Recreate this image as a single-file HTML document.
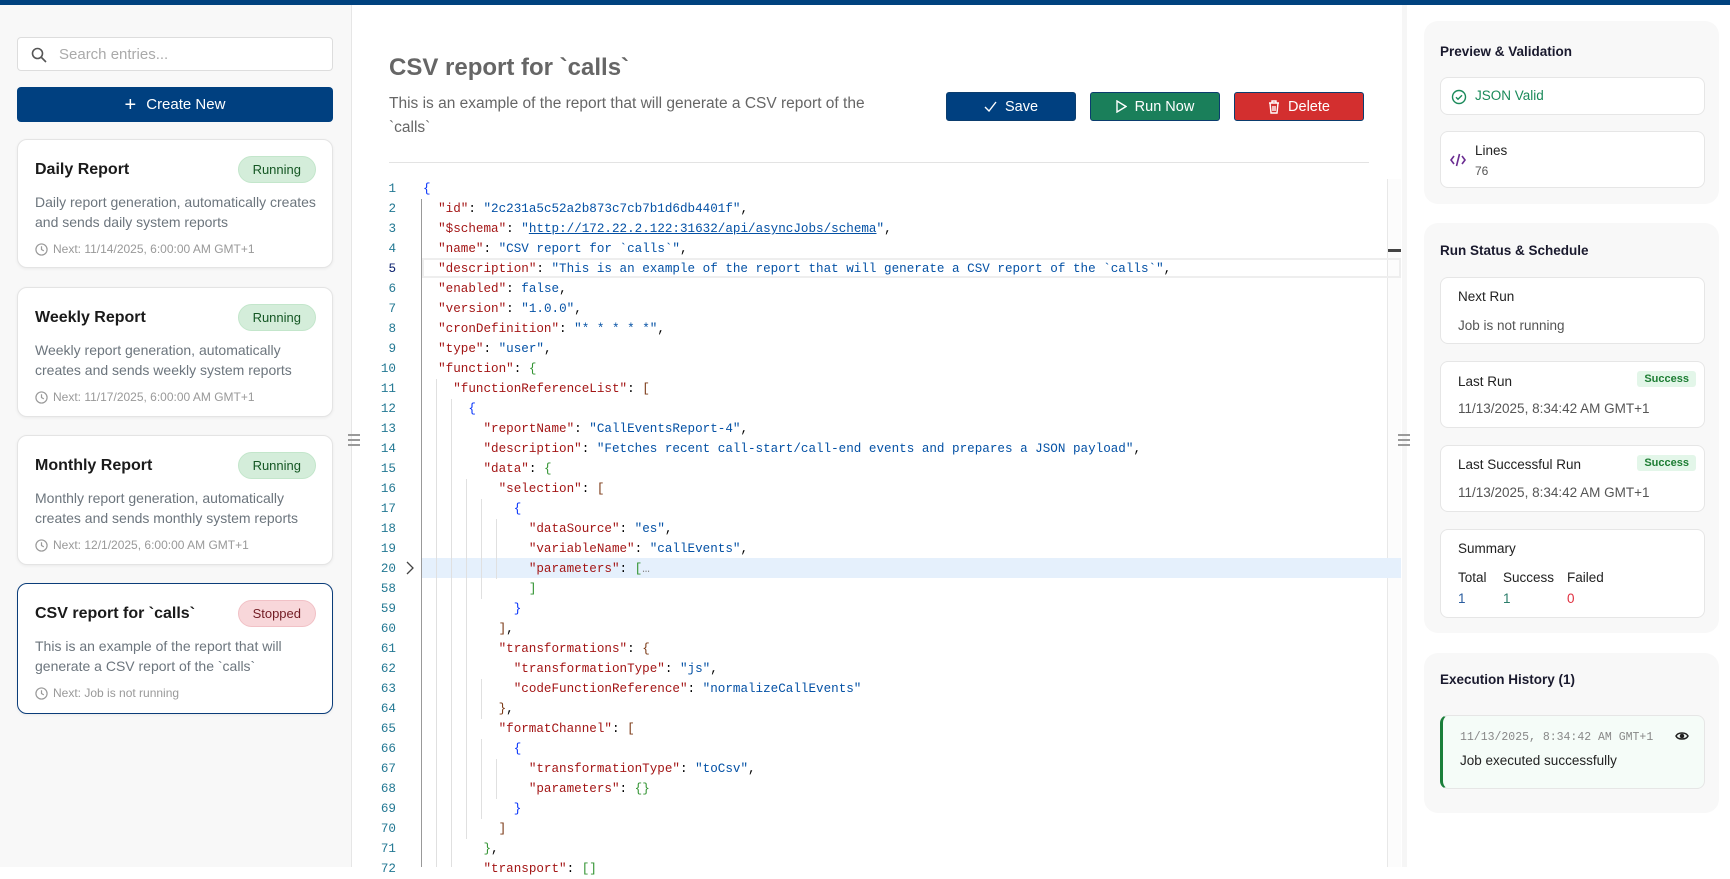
<!DOCTYPE html>
<html><head><meta charset="utf-8">
<style>
*{box-sizing:border-box;margin:0;padding:0}
body{width:1730px;height:867px;overflow:hidden;background:#fff;font-family:"Liberation Sans",sans-serif;position:relative;color:#222}
.topbar{position:absolute;left:0;top:0;width:1730px;height:5px;background:#00427f}
.left{position:absolute;left:0;top:5px;width:352px;height:862px;background:#f8f8f8;border-right:1px solid #e6e6e6}
.search{position:absolute;left:17px;top:32px;width:316px;height:34px;background:#fff;border:1px solid #ddd;border-radius:4px}
.search span{position:absolute;left:41px;top:8px;font-size:15px;color:#aaa}
.create{position:absolute;left:17px;top:82px;width:316px;height:35px;background:#004080;border-radius:4px;color:#fff;font-size:15px;text-align:center;line-height:35px}
.card{position:absolute;left:17px;width:316px;background:#fff;border:1px solid #e4e4e4;border-radius:10px;box-shadow:0 1px 3px rgba(0,0,0,.06)}
.card.sel{border:1px solid #0b3d7a}
.card h3{position:absolute;left:17px;top:21px;font-size:16px;font-weight:bold;color:#1a1a1a}
.badge{position:absolute;right:16px;top:16px;height:27px;padding:0 14px;border-radius:14px;font-size:13px;line-height:25px}
.run{background:#d4edda;border:1px solid #c3e6cb;color:#155724}
.stop{background:#f8d7da;border:1px solid #f1c1c6;color:#721c24}
.card p{position:absolute;left:17px;top:52px;width:295px;font-size:14px;line-height:20px;color:#6c757d;white-space:nowrap}
.card .nx{position:absolute;left:17px;top:102px;font-size:12px;color:#999;display:flex;align-items:center;gap:5px}
.main{position:absolute;left:352px;top:5px;width:1050px;height:862px;background:#fff}
h1{position:absolute;left:389px;top:54px;font-size:24px;font-weight:bold;color:#666}
.desc{position:absolute;left:389px;top:92px;width:500px;font-size:15.5px;line-height:24px;color:#666}
.btn{position:absolute;top:92px;width:130px;height:29px;border-radius:3px;color:#fff;font-size:14.5px;display:flex;align-items:center;justify-content:center;gap:8px}
.hr{position:absolute;left:389px;top:162px;width:980px;height:1px;background:#e3e3e3}
.ln{position:absolute;left:360px;width:36px;text-align:right;font-family:"Liberation Mono",monospace;font-size:12.6px;color:#237893;line-height:20px}
.code{position:absolute;left:423px;font-family:"Liberation Mono",monospace;font-size:12.6px;line-height:20px;white-space:pre;color:#000}
.k{color:#a31515}.s{color:#0451a5}.b1{color:#0431fa}.b2{color:#319331}.b3{color:#7b3814}
.g{position:absolute;width:1px;background:#e0e0e0}
.right{position:absolute;left:1402px;top:5px;width:328px;height:862px;background:#fff;border-left:5px solid #f6f6f6}
.sec{position:absolute;left:1424px;width:295px;background:#f8f8f8;border-radius:14px}
.sec h4{position:absolute;left:16px;font-size:13.5px;font-weight:bold;color:#1a1a2e}
.ic{position:absolute;left:16px;width:265px;background:#fff;border:1px solid #e6e6e6;border-radius:8px}
.lb{position:absolute;left:17px;font-size:13.5px;color:#222}
.vl{position:absolute;left:17px;font-size:13.5px;color:#555}
.sb{position:absolute;right:8px;top:9px;background:#e3f6e9;color:#1e7e34;font-size:11px;font-weight:bold;padding:2px 7px;border-radius:3px}
</style></head><body>
<div class="topbar"></div>
<div class="left">
 <div class="search"><svg style="position:absolute;left:13px;top:9px" width="16" height="16" viewBox="0 0 16 16" fill="none" stroke="#555" stroke-width="1.6"><circle cx="6.5" cy="6.5" r="5"/><path d="M10.5 10.5L15 15"/></svg><span>Search entries...</span></div>
 <div class="create"><span style="font-size:20px;vertical-align:-2px;margin-right:10px">+</span>Create New</div>
 <div class="card" style="top:134px;height:129px"><h3>Daily Report</h3><div class="badge run">Running</div><p>Daily report generation, automatically creates<br>and sends daily system reports</p><div class="nx"><svg width="13" height="13" viewBox="0 0 14 14" fill="none" stroke="#999" stroke-width="1.3"><circle cx="7" cy="7" r="6"/><path d="M7 3.5V7l2.5 1.5"/></svg>Next: 11/14/2025, 6:00:00 AM GMT+1</div></div>
 <div class="card" style="top:282px;height:130px"><h3>Weekly Report</h3><div class="badge run">Running</div><p>Weekly report generation, automatically<br>creates and sends weekly system reports</p><div class="nx"><svg width="13" height="13" viewBox="0 0 14 14" fill="none" stroke="#999" stroke-width="1.3"><circle cx="7" cy="7" r="6"/><path d="M7 3.5V7l2.5 1.5"/></svg>Next: 11/17/2025, 6:00:00 AM GMT+1</div></div>
 <div class="card" style="top:430px;height:130px"><h3>Monthly Report</h3><div class="badge run">Running</div><p>Monthly report generation, automatically<br>creates and sends monthly system reports</p><div class="nx"><svg width="13" height="13" viewBox="0 0 14 14" fill="none" stroke="#999" stroke-width="1.3"><circle cx="7" cy="7" r="6"/><path d="M7 3.5V7l2.5 1.5"/></svg>Next: 12/1/2025, 6:00:00 AM GMT+1</div></div>
 <div class="card sel" style="top:578px;height:131px"><h3>CSV report for `calls`</h3><div class="badge stop">Stopped</div><p>This is an example of the report that will<br>generate a CSV report of the `calls`</p><div class="nx"><svg width="13" height="13" viewBox="0 0 14 14" fill="none" stroke="#999" stroke-width="1.3"><circle cx="7" cy="7" r="6"/><path d="M7 3.5V7l2.5 1.5"/></svg>Next: Job is not running</div></div>
</div>
<div class="main"></div>
<h1>CSV report for `calls`</h1>
<div class="desc">This is an example of the report that will generate a CSV report of the `calls`</div>
<div class="btn" style="left:946px;background:#004080;border:1px solid #0b3d6e"><svg width="13" height="11" viewBox="0 0 13 11" fill="none" stroke="#fff" stroke-width="1.4"><path d="M1 6l4 4 7-9"/></svg>Save</div>
<div class="btn" style="left:1090px;background:#1a7f5a;border:1px solid #0b3d6e"><svg width="11" height="13" viewBox="0 0 11 13" fill="none" stroke="#fff" stroke-width="1.4"><path d="M1 1v11l9-5.5z"/></svg>Run Now</div>
<div class="btn" style="left:1234px;background:#d32f2f;border:1px solid #0b3d6e"><svg width="12" height="14" viewBox="0 0 12 14" fill="none" stroke="#fff" stroke-width="1.4"><path d="M1 3h10M4 3V1h4v2M2 3l1 10h6l1-10M5 6v5M7 6v5"/></svg>Delete</div>
<div class="hr"></div>
<div style="position:absolute;left:1387px;top:179px;width:14px;height:688px;border-left:1px solid #e8e8e8;background:#fcfcfc"></div>
<div style="position:absolute;left:1388px;top:249px;width:13px;height:3px;background:#444"></div>
<div style="position:absolute;left:422px;top:258px;width:979px;height:20px;border:2px solid #eee"></div>
<div style="position:absolute;left:422px;top:558px;width:979px;height:20px;background:#e5f0fc"></div>
<svg style="position:absolute;left:405px;top:561px" width="10" height="14"><path d="M2 1l6 6-6 6" fill="none" stroke="#444" stroke-width="1.3"/></svg>
<div class="g" style="left:421px;top:199px;height:668px;background:#999"></div>
<div class="g" style="left:436px;top:379px;height:488px"></div>
<div class="g" style="left:451px;top:399px;height:468px"></div>
<div class="g" style="left:466px;top:479px;height:360px"></div>
<div class="g" style="left:481px;top:499px;height:100px"></div>
<div class="g" style="left:496px;top:519px;height:60px"></div>
<div class="g" style="left:481px;top:679px;height:40px"></div>
<div class="g" style="left:481px;top:739px;height:80px"></div>
<div class="g" style="left:496px;top:759px;height:40px"></div>
<div class="ln" style="top:179px">1<br>2<br>3<br>4<br><span style="color:#0b216f">5</span><br>6<br>7<br>8<br>9<br>10<br>11<br>12<br>13<br>14<br>15<br>16<br>17<br>18<br>19<br>20<br>58<br>59<br>60<br>61<br>62<br>63<br>64<br>65<br>66<br>67<br>68<br>69<br>70<br>71<br>72</div>
<div class="code" style="top:179px"><span class="b1">{</span>
  <span class="k">"id"</span>: <span class="s">"2c231a5c52a2b873c7cb7b1d6db4401f"</span>,
  <span class="k">"$schema"</span>: <span class="s">"<u>http://172.22.2.122:31632/api/asyncJobs/schema</u>"</span>,
  <span class="k">"name"</span>: <span class="s">"CSV report for `calls`"</span>,
  <span class="k">"description"</span>: <span class="s">"This is an example of the report that will generate a CSV report of the `calls`"</span>,
  <span class="k">"enabled"</span>: <span class="s">false</span>,
  <span class="k">"version"</span>: <span class="s">"1.0.0"</span>,
  <span class="k">"cronDefinition"</span>: <span class="s">"* * * * *"</span>,
  <span class="k">"type"</span>: <span class="s">"user"</span>,
  <span class="k">"function"</span>: <span class="b2">{</span>
    <span class="k">"functionReferenceList"</span>: <span class="b3">[</span>
      <span class="b1">{</span>
        <span class="k">"reportName"</span>: <span class="s">"CallEventsReport-4"</span>,
        <span class="k">"description"</span>: <span class="s">"Fetches recent call-start/call-end events and prepares a JSON payload"</span>,
        <span class="k">"data"</span>: <span class="b2">{</span>
          <span class="k">"selection"</span>: <span class="b3">[</span>
            <span class="b1">{</span>
              <span class="k">"dataSource"</span>: <span class="s">"es"</span>,
              <span class="k">"variableName"</span>: <span class="s">"callEvents"</span>,
              <span class="k">"parameters"</span>: <span class="b2">[</span><span style="color:#888">…</span>
              <span class="b2">]</span>
            <span class="b1">}</span>
          <span class="b3">]</span>,
          <span class="k">"transformations"</span>: <span class="b3">{</span>
            <span class="k">"transformationType"</span>: <span class="s">"js"</span>,
            <span class="k">"codeFunctionReference"</span>: <span class="s">"normalizeCallEvents"</span>
          <span class="b3">}</span>,
          <span class="k">"formatChannel"</span>: <span class="b3">[</span>
            <span class="b1">{</span>
              <span class="k">"transformationType"</span>: <span class="s">"toCsv"</span>,
              <span class="k">"parameters"</span>: <span class="b2">{}</span>
            <span class="b1">}</span>
          <span class="b3">]</span>
        <span class="b2">}</span>,
        <span class="k">"transport"</span>: <span class="b2">[]</span></div>
<div class="right"></div>
<svg style="position:absolute;left:348px;top:433px" width="12" height="14"><path d="M0 2h12M0 7h12M0 12h12" stroke="#9a9a9a" stroke-width="2"/></svg>
<svg style="position:absolute;left:1398px;top:433px" width="12" height="14"><path d="M0 2h12M0 7h12M0 12h12" stroke="#9a9a9a" stroke-width="2"/></svg>
<div class="sec" style="top:21px;height:183px"><h4 style="top:23px">Preview &amp; Validation</h4>
 <div class="ic" style="top:56px;height:38px"><svg style="position:absolute;left:10px;top:11px" width="16" height="16" viewBox="0 0 16 16" fill="none" stroke="#1a8a5a" stroke-width="1.4"><circle cx="8" cy="8" r="6.5"/><path d="M5 8.2l2 2 4-4"/></svg><span style="position:absolute;left:34px;top:10px;font-size:13.5px;color:#1a8a5a">JSON Valid</span></div>
 <div class="ic" style="top:110px;height:57px"><svg style="position:absolute;left:9px;top:21px" width="16" height="14" viewBox="0 0 16 14" fill="none" stroke="#6a2c91" stroke-width="1.6"><path d="M4 3L1 7l3 4M12 3l3 4-3 4M9.5 1l-3 12"/></svg><span style="position:absolute;left:34px;top:11px;font-size:13.5px">Lines</span><span style="position:absolute;left:34px;top:32px;font-size:12px;color:#555">76</span></div>
</div>
<div class="sec" style="top:223px;height:410px"><h4 style="top:20px">Run Status &amp; Schedule</h4>
 <div class="ic" style="top:54px;height:67px"><span class="lb" style="top:11px">Next Run</span><span class="vl" style="top:40px">Job is not running</span></div>
 <div class="ic" style="top:138px;height:67px"><span class="lb" style="top:12px">Last Run</span><span class="sb">Success</span><span class="vl" style="top:39px">11/13/2025, 8:34:42 AM GMT+1</span></div>
 <div class="ic" style="top:222px;height:67px"><span class="lb" style="top:11px">Last Successful Run</span><span class="sb">Success</span><span class="vl" style="top:39px">11/13/2025, 8:34:42 AM GMT+1</span></div>
 <div class="ic" style="top:306px;height:89px"><span class="lb" style="top:11px">Summary</span>
  <span class="lb" style="top:40px">Total</span><span class="lb" style="left:62px;top:40px">Success</span><span class="lb" style="left:126px;top:40px">Failed</span>
  <span class="lb" style="top:61px;color:#2a5d9f">1</span><span class="lb" style="left:62px;top:61px;color:#2a7d6a">1</span><span class="lb" style="left:126px;top:61px;color:#e03040">0</span></div>
</div>
<div class="sec" style="top:653px;height:160px"><h4 style="top:19px">Execution History (1)</h4>
 <div class="ic" style="top:62px;height:74px;background:#f5fcf8;border-left:3px solid #1a7f3a;border-radius:8px"><span style="position:absolute;left:17px;top:15px;font-family:'Liberation Mono',monospace;font-size:11.5px;color:#888">11/13/2025, 8:34:42 AM GMT+1</span><svg style="position:absolute;left:232px;top:15px" width="14" height="10" viewBox="0 0 14 10" fill="none" stroke="#222" stroke-width="1.5"><path d="M1 5c2-4 10-4 12 0c-2 4-10 4-12 0z"/><circle cx="7" cy="5" r="1.5" fill="#222"/></svg><span style="position:absolute;left:17px;top:37px;font-size:13.5px">Job executed successfully</span></div>
</div>
</body></html>
